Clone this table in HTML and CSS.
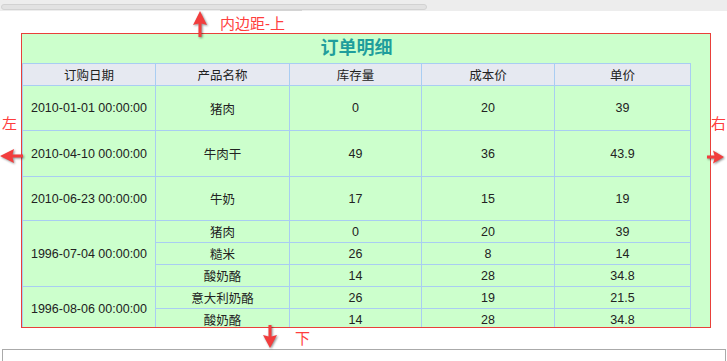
FILE: index.html
```html
<!DOCTYPE html>
<html lang="zh-CN">
<head>
<meta charset="utf-8">
<title>订单明细</title>
<link rel="stylesheet" href="styles.css">
</head>
<body>
<div class="topbar"><div class="scroll"></div><div class="thumb"></div></div>

<div class="main">
  <div class="title">订单明细</div>
  <table class="grid">
    <colgroup>
      <col class="c1"><col class="c2"><col class="c3"><col class="c4"><col class="c5">
    </colgroup>
    <thead>
      <tr><th>订购日期</th><th>产品名称</th><th>库存量</th><th>成本价</th><th>单价</th></tr>
    </thead>
    <tbody>
      <tr class="r1"><td>2010-01-01 00:00:00</td><td>猪肉</td><td>0</td><td>20</td><td>39</td></tr>
      <tr class="r2"><td>2010-04-10 00:00:00</td><td>牛肉干</td><td>49</td><td>36</td><td>43.9</td></tr>
      <tr class="r3"><td>2010-06-23 00:00:00</td><td>牛奶</td><td>17</td><td>15</td><td>19</td></tr>
      <tr class="rs"><td rowspan="3">1996-07-04 00:00:00</td><td>猪肉</td><td>0</td><td>20</td><td>39</td></tr>
      <tr class="rs"><td>糙米</td><td>26</td><td>8</td><td>14</td></tr>
      <tr class="rs"><td>酸奶酪</td><td>14</td><td>28</td><td>34.8</td></tr>
      <tr class="rs"><td rowspan="2">1996-08-06 00:00:00</td><td>意大利奶酪</td><td>26</td><td>19</td><td>21.5</td></tr>
      <tr class="rs"><td>酸奶酪</td><td>14</td><td>28</td><td>34.8</td></tr>
    </tbody>
  </table>
</div>

<div class="next"><div class="next-title">内容区</div></div>

<div class="note note-top">内边距-上</div>
<div class="note note-left">左</div>
<div class="note note-right">右</div>
<div class="note note-bottom">下</div>

<svg class="arrow arrow-up" width="16" height="27" viewBox="0 0 16 27"><path d="M8 0 L15 14 L9.5 12.5 L9.5 26 L6.5 26 L6.5 12.5 L1 14 Z"/></svg>
<svg class="arrow arrow-left" width="24" height="16" viewBox="0 0 24 16"><path d="M0 8 L14 1 L12.5 6.5 L23 6.5 L23 9.5 L12.5 9.5 L14 15 Z"/></svg>
<svg class="arrow arrow-right" width="18" height="16" viewBox="0 0 18 16"><path d="M17 8 L6 1.5 L7.5 6.5 L0 6.5 L0 9.5 L7.5 9.5 L6 14.5 Z"/></svg>
<svg class="arrow arrow-down" width="16" height="24" viewBox="0 0 16 24"><path d="M8 23 L15 10 L9.5 11.5 L9.5 0 L6.5 0 L6.5 11.5 L1 10 Z"/></svg>
</body>
</html>
```

FILE: styles.css
```css
html, body {
  margin: 0;
  padding: 0;
  background: #ffffff;
  font-family: "Liberation Sans", "Noto Sans CJK SC", sans-serif;
  color: #222;
  overflow: hidden;
}
body {
  position: relative;
  width: 727px;
  height: 361px;
}
.topbar {
  position: relative;
  height: 11px;
  background: #ededed;
  padding-top: 4px;
  box-sizing: border-box;
}
.scroll {
  margin-left: 1px;
  width: 424px;
  height: 4px;
  border: 1px solid #d2d2d2;
  border-radius: 4px;
  background: #e2e2e2;
}
.thumb {
  position: absolute;
  left: 220px;
  top: 10px;
  width: 82px;
  height: 1px;
  background: #d4d4d4;
}
.main {
  margin: 22px 0 0 21px;
  width: 690px;
  height: 295px;
  box-sizing: border-box;
  border: 1px solid #e8403a;
  background: #ccffcc;
  overflow: hidden;
}
.title {
  width: 669px;
  height: 29px;
  line-height: 28px;
  text-align: center;
  font-size: 18px;
  font-weight: bold;
  color: #1f9e9c;
}
.grid {
  border-collapse: collapse;
  table-layout: fixed;
  width: 669px;
  font-size: 12.5px;
}
.c1 { width: 133px; }
.c2 { width: 134px; }
.c3 { width: 132px; }
.c4 { width: 133px; }
.c5 { width: 136px; }
.grid th, .grid td {
  border: 1px solid #a9cdf2;
  text-align: center;
  padding: 0;
  font-weight: normal;
  white-space: nowrap;
  overflow: hidden;
}
.grid th {
  background: #e6e9f1;
  height: 21px;
}
.r1 td { height: 44px; }
.r2 td { height: 45px; }
.r3 td { height: 43px; }
.rs td { height: 21px; }
.next {
  margin: 21px 0 0 2px;
  width: 724px;
  height: 60px;
  box-sizing: border-box;
  border: 1px solid #aaaaaa;
  padding-top: 8px;
  text-align: center;
}
.next-title {
  font-size: 14px;
  font-weight: bold;
  color: #333;
}
.note {
  position: absolute;
  color: #ff3d3d;
  font-size: 15px;
  line-height: 16px;
}
.note-top { left: 220px; top: 16px; }
.note-left { left: 2px; top: 116px; }
.note-right { left: 711px; top: 116px; }
.note-bottom { left: 295px; top: 331px; }
.arrow {
  position: absolute;
  fill: #f23d3d;
  filter: drop-shadow(1px 1px 1px rgba(0,0,0,0.45));
}
.arrow-up { left: 192px; top: 11px; }
.arrow-left { left: 0px; top: 148px; }
.arrow-right { left: 707px; top: 149px; }
.arrow-down { left: 262px; top: 325px; }
```
